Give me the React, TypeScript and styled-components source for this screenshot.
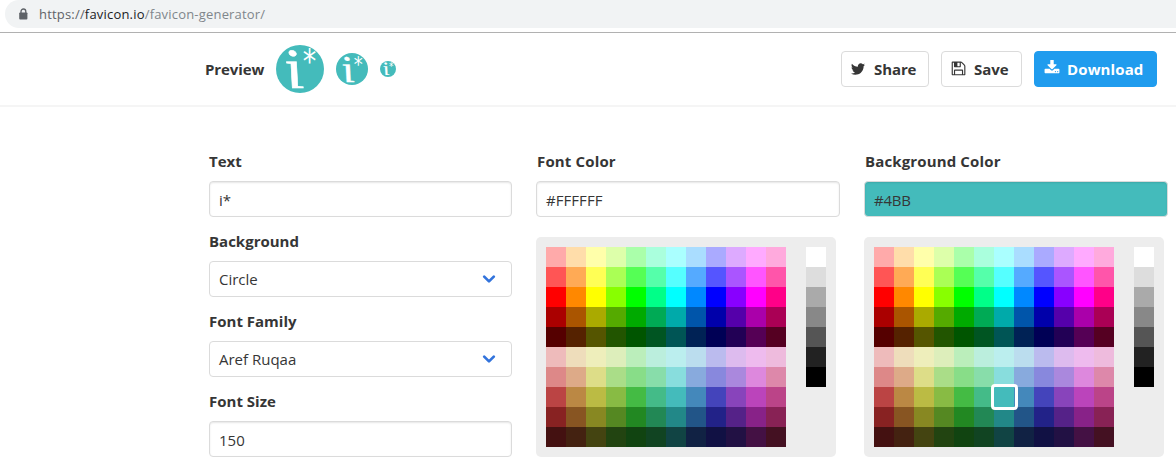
import React from "react";
import styled, { createGlobalStyle } from "styled-components";

const GlobalStyle = createGlobalStyle`
  * { box-sizing: border-box; }
  body {
    margin: 0;
    background: #fff;
    color: #363636;
    font-family: "Open Sans", "Noto Sans", sans-serif;
    font-size: 15px;
    overflow: hidden;
  }
`;

const Page = styled.div`
  width: 1176px;
  height: 468px;
  overflow: hidden;
`;

const BrowserBar = styled.div`
  height: 33px;
  padding-left: 5px;
  border-bottom: 1px solid #b1b1b1;
`;

const AddressPill = styled.div`
  display: flex;
  align-items: center;
  height: 28px;
  padding-left: 13px;
  border-radius: 14px 0 0 14px;
  background: #f1f3f4;
`;

const Address = styled.span`
  margin-left: 10px;
  color: #80868b;
  font-size: 13px;
  line-height: 28px;
  letter-spacing: 0.19px;
  white-space: nowrap;
`;

const Scheme = styled.span`
  color: #5f6368;
`;

const Host = styled.span`
  color: #202124;
`;

const Nav = styled.nav`
  display: flex;
  align-items: center;
  justify-content: space-between;
  height: 74px;
  padding: 0 19px 0 205px;
  border-bottom: 2px solid #f5f5f5;
`;

const Previews = styled.div`
  display: flex;
  align-items: center;
  gap: 12px;
`;

const Bold = styled.span<{ $track?: number }>`
  font-weight: 700;
  line-height: 24px;
  letter-spacing: ${(p) => p.$track ?? 0}px;
  white-space: nowrap;
`;

const PreviewLabel = styled(Bold)`
  width: 59px;
`;

const Actions = styled.div`
  display: flex;
  gap: 12px;
  margin-top: -1px;
`;

const ActionButton = styled.button<{ $width: number; $primary?: boolean }>`
  display: flex;
  align-items: center;
  width: ${(p) => p.$width}px;
  height: 36px;
  padding: 0 0 0 ${(p) => (p.$primary ? 9 : 8)}px;
  gap: ${(p) => (p.$primary ? 7 : 8)}px;
  border: 1px solid ${(p) => (p.$primary ? "#209cee" : "#dbdbdb")};
  border-radius: 4px;
  background: ${(p) => (p.$primary ? "#209cee" : "#fff")};
  color: ${(p) => (p.$primary ? "#fff" : "#363636")};
  font-family: inherit;
  font-size: 15px;

  svg {
    margin-bottom: ${(p) => (p.$primary ? 2 : 0)}px;
  }
`;

const Columns = styled.main`
  display: grid;
  grid-template-columns: 303px 304px 304px;
  gap: 24px;
  padding: 42px 0 0 209px;
`;

const Column = styled.section`
  display: flex;
  flex-direction: column;
`;

const Field = styled.label`
  display: flex;
  flex-direction: column;
  gap: 8px;
  margin-bottom: 12px;
`;

const ColorLabel = styled(Bold)`
  padding-left: 1px;
`;

const Control = styled.div<{ $fill?: string; $select?: boolean; $track?: number }>`
  display: flex;
  align-items: center;
  justify-content: space-between;
  height: 36px;
  padding: ${(p) => (p.$select ? 0 : 2)}px 14px 0 9px;
  border: 1px solid #dbdbdb;
  border-radius: 4px;
  background: ${(p) => p.$fill ?? "#fff"};
  box-shadow: ${(p) => (p.$select ? "none" : "inset 0 1px 2px rgba(10, 10, 10, 0.1)")};
  letter-spacing: ${(p) => p.$track ?? 0}px;
  font-size: 15px;
  font-weight: 400;
`;

const Picker = styled.div`
  display: flex;
  justify-content: space-between;
  width: 300px;
  height: 220px;
  margin-top: 8px;
  padding: 10px;
  border-radius: 5px;
  background: #ededed;
`;

const Swatches = styled.div<{ $columns: number }>`
  display: grid;
  grid-template-columns: repeat(${(p) => p.$columns}, 20px);
  grid-auto-rows: 20px;
`;

const Swatch = styled.div<{ $color: string }>`
  position: relative;
  background: ${(p) => p.$color};
`;

const Marker = styled.span`
  position: absolute;
  z-index: 1;
  top: -3px;
  left: -3px;
  width: 27px;
  height: 26px;
  border: 3px solid #fff;
  border-radius: 4px;
`;

const hues = [
  "faa fda ffa dfa afa afd aff adf aaf daf faf fad",
  "f55 fa5 ff5 af5 5f5 5fa 5ff 5af 55f a5f f5f f5a",
  "f00 f80 ff0 8f0 0f0 0f8 0ff 08f 00f 80f f0f f08",
  "a00 a50 aa0 5a0 0a0 0a5 0aa 05a 00a 50a a0a a05",
  "500 520 550 250 050 052 055 025 005 205 505 502",
  "ebb edb eeb deb beb bed bee bde bbe dbe ebe ebd",
  "d88 da8 dd8 ad8 8d8 8da 8dd 8ad 88d a8d d8d d8a",
  "b44 b84 bb4 8b4 4b4 4b8 4bb 48b 44b 84b b4b b48",
  "822 852 882 582 282 285 288 258 228 528 828 825",
  "411 421 441 241 141 142 144 124 114 214 414 412",
].flatMap((row) => row.split(" "));

const greys = ["fff", "ddd", "aaa", "888", "555", "222", "000"];

function ColorPicker({ selected }: { selected?: string }) {
  return (
    <Picker>
      <Swatches $columns={12}>
        {hues.map((c) => (
          <Swatch key={c} $color={`#${c}`}>{c === selected && <Marker />}</Swatch>
        ))}
      </Swatches>
      <Swatches $columns={1}>
        {greys.map((c) => (
          <Swatch key={c} $color={`#${c}`} />
        ))}
      </Swatches>
    </Picker>
  );
}

const FaviconSvg = styled.svg`
  overflow: visible;
`;

function Favicon({ size }: { size: number }) {
  return (
    <FaviconSvg width={size} height={size} viewBox="0 0 48 48">
      <circle cx="24" cy="24" r="24" fill="#4bb" />
      <text
        transform="translate(12.5 43.2) scale(1.2 1) skewX(12.5)"
        fill="#fff"
        stroke="#fff"
        strokeWidth="0.5"
        fontFamily="Liberation Serif, serif"
        fontStyle="italic"
        fontSize="57"
      >
        i
      </text>
      <text
        transform="translate(26.800 28) scale(0.82 1)"
        fill="#fff"
        fontFamily="DejaVu Sans, sans-serif"
        fontSize="33"
      >
        *
      </text>
    </FaviconSvg>
  );
}

const LockIcon = () => (
  <svg width="11" height="12" viewBox="0 0 11 12">
    <path d="M3 5V3.4a2.4 2.4 0 0 1 4.8 0V5" fill="none" stroke="#5f6368" strokeWidth="1.3" />
    <rect x="1.2" y="4.4" width="8.2" height="7" rx="0.9" fill="#5f6368" />
  </svg>
);

const TwitterIcon = () => (
  <svg width="16" height="16" viewBox="0 0 1792 1792" fill="currentColor">
    <path d="M1684 408q-67 98-162 167 1 14 1 42 0 130-38 259.500t-115.500 248.500-184.500 210.500-258 146-323 54.500q-271 0-496-145 35 4 78 4 225 0 401-138-105-2-188-64.500t-114-159.500q33 5 61 5 43 0 85-11-112-23-185.500-111.500t-73.500-205.500v-4q68 38 146 41-66-44-105-115t-39-154q0-88 44-163 121 149 294.500 238.500t371.500 99.500q-8-38-8-74 0-134 94.500-228.500t228.500-94.500q140 0 236 102 109-21 205-78-37 115-142 178 93-10 186-50z" />
  </svg>
);

const SaveIcon = () => (
  <svg width="16" height="16" viewBox="-60 60 1792 1792" fill="currentColor">
    <path d="M512 1536h768v-384h-768v384zm896 0h128v-896q0-14-10-38.500t-20-34.500l-281-281q-10-10-34-20t-39-10v416q0 40-28 68t-68 28h-576q-40 0-68-28t-28-68v-416h-128v1280h128v-416q0-40 28-68t68-28h832q40 0 68 28t28 68v416zm-384-928v-320q0-13-9.500-22.500t-22.500-9.500h-192q-13 0-22.500 9.500t-9.500 22.500v320q0 13 9.500 22.500t22.500 9.500h192q13 0 22.500-9.500t9.500-22.500zm640 32v928q0 40-28 68t-68 28h-1344q-40 0-68-28t-28-68v-1344q0-40 28-68t68-28h928q40 0 88 20t76 48l280 280q28 28 48 76t20 88z" />
  </svg>
);

const DownloadIcon = () => (
  <svg width="16" height="16" viewBox="0 40 1792 1792" fill="currentColor">
    <path d="M1344 1344q0-26-19-45t-45-19-45 19-19 45 19 45 45 19 45-19 19-45zm256 0q0-26-19-45t-45-19-45 19-19 45 19 45 45 19 45-19 19-45zm128-224v320q0 40-28 68t-68 28h-1472q-40 0-68-28t-28-68v-320q0-40 28-68t68-28h465l135 136q58 56 136 56t136-56l136-136h464q40 0 68 28t28 68zm-325-569q17 41-14 70l-448 448q-18 19-45 19t-45-19l-448-448q-31-29-14-70 17-39 59-39h256v-448q0-26 19-45t45-19h256q26 0 45 19t19 45v448h256q42 0 59 39z" />
  </svg>
);

const Chevron = () => (
  <svg width="16" height="12" viewBox="0 0 16 12">
    <path d="M3.2 3.6L8 8.4l4.800-4.800" fill="none" stroke="#3273dc" strokeWidth="2.700" strokeLinecap="round" strokeLinejoin="round" />
  </svg>
);

export default function App() {
  return (
    <Page>
      <GlobalStyle />
      <BrowserBar>
        <AddressPill>
          <LockIcon />
          <Address>
            <Scheme>https://</Scheme>
            <Host>favicon.io</Host>/favicon-generator/
          </Address>
        </AddressPill>
      </BrowserBar>
      <Nav>
        <Previews>
          <PreviewLabel $track={-0.1}>Preview</PreviewLabel>
          <Favicon size={48} />
          <Favicon size={32} />
          <Favicon size={16} />
        </Previews>
        <Actions>
          <ActionButton $width={88}><TwitterIcon /><Bold $track={-0.1}>Share</Bold></ActionButton>
          <ActionButton $width={81}><SaveIcon /><Bold>Save</Bold></ActionButton>
          <ActionButton $width={123} $primary><DownloadIcon /><Bold $track={0.12}>Download</Bold></ActionButton>
        </Actions>
      </Nav>
      <Columns>
        <Column>
          <Field><Bold>Text</Bold><Control>i*</Control></Field>
          <Field><Bold>Background</Bold><Control $select>Circle<Chevron /></Control></Field>
          <Field><Bold>Font Family</Bold><Control $select>Aref Ruqaa<Chevron /></Control></Field>
          <Field><Bold>Font Size</Bold><Control>150</Control></Field>
        </Column>
        <Column>
          <Field><ColorLabel $track={0.15}>Font Color</ColorLabel><Control $track={0.05}>#FFFFFF</Control></Field>
          <ColorPicker />
        </Column>
        <Column>
          <Field><ColorLabel $track={0.14}>Background Color</ColorLabel><Control $fill="#4bb" $track={-0.2}>#4BB</Control></Field>
          <ColorPicker selected="4bb" />
        </Column>
      </Columns>
    </Page>
  );
}
